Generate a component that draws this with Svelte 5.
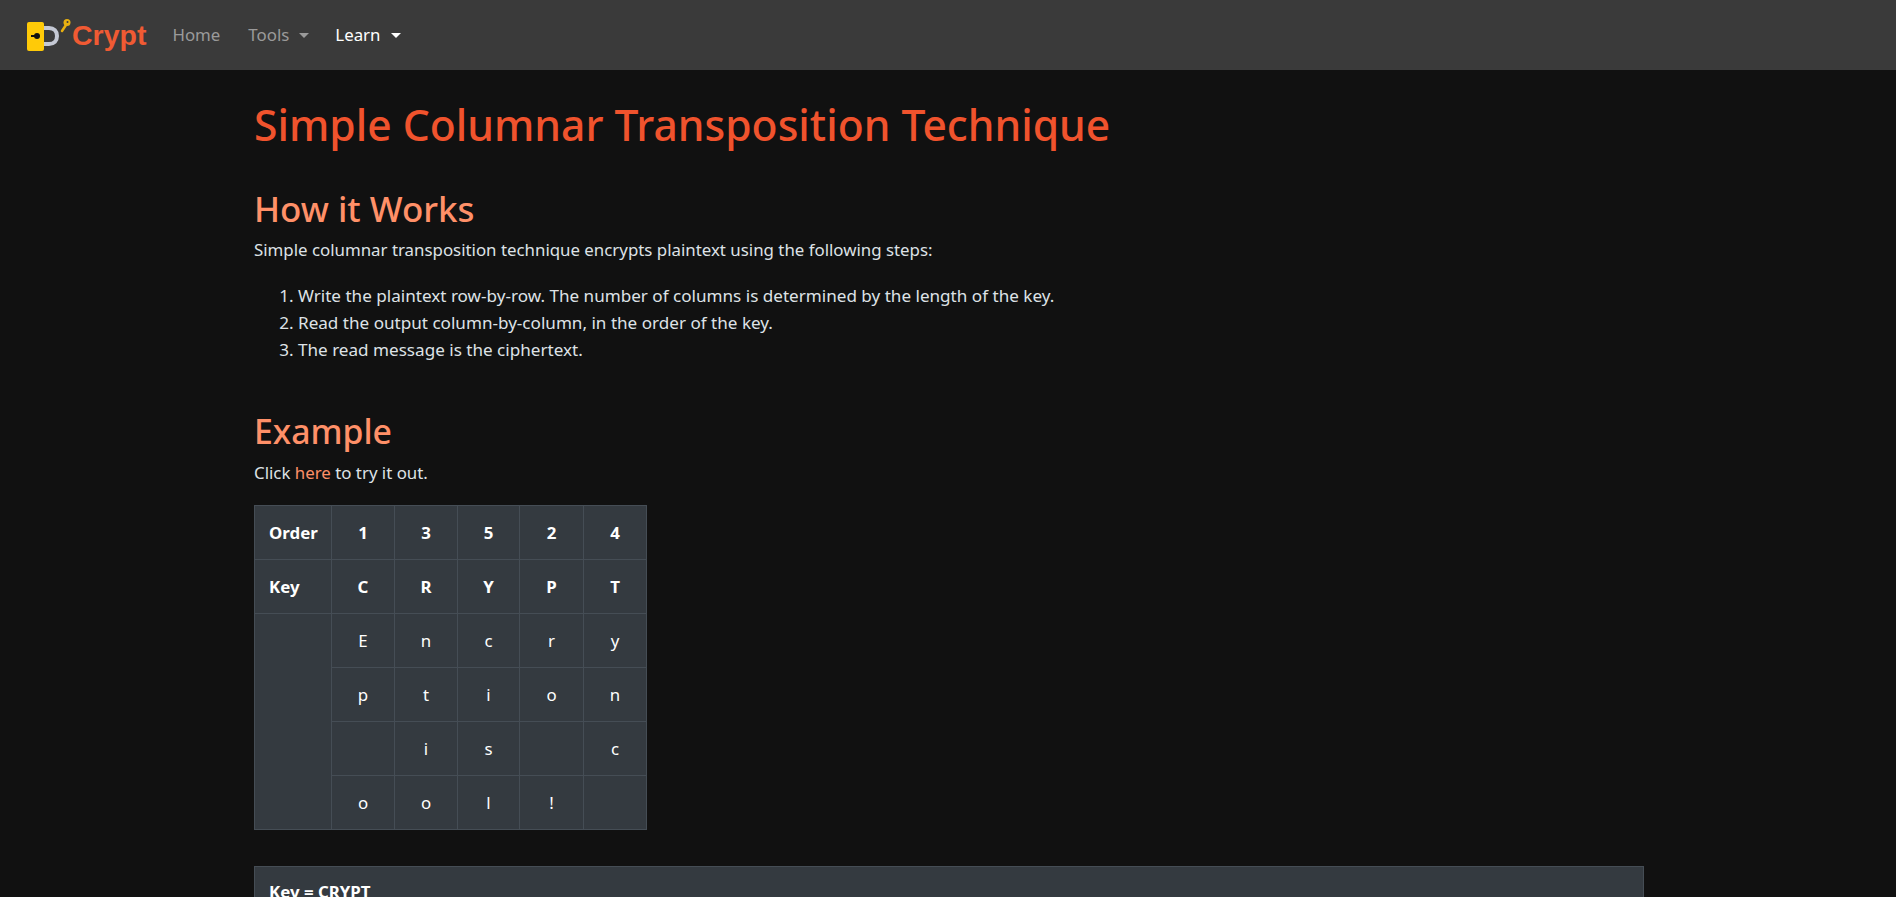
<script>
  const header = ["1", "3", "5", "2", "4"];
  const keyRow = ["C", "R", "Y", "P", "T"];
  const grid = [
    ["E", "n", "c", "r", "y"],
    ["p", "t", "i", "o", "n"],
    ["", "i", "s", "", "c"],
    ["o", "o", "l", "!", ""],
  ];
  const steps = [
    "Write the plaintext row-by-row. The number of columns is determined by the length of the key.",
    "Read the output column-by-column, in the order of the key.",
    "The read message is the ciphertext.",
  ];
</script>

<div class="page">
  <nav class="navbar">
    <a class="brand" href="#top">
      <svg class="logo" width="50" height="36" viewBox="0 0 50 36" aria-hidden="true">
        <path d="M17 12h6c5 0 8 3 8 8s-3 8-8 8h-6" fill="none" stroke="#c4c8d4" stroke-width="4" />
        <rect x="1" y="6" width="17" height="29" rx="2" fill="#ffca08" />
        <circle cx="11" cy="20" r="3" fill="#111" />
        <rect x="5" y="19" width="6" height="2" fill="#111" />
        <path d="M40 9l-4 6" stroke="#e8b010" stroke-width="2.500" stroke-linecap="round" />
        <circle cx="41" cy="6.500" r="3.500" fill="#e8b010" />
        <circle cx="41.500" cy="6" r="1" fill="#3a3a3a" />
      </svg>
      <span>Crypt</span>
    </a>
    <ul class="links">
      <li><a href="#top">Home</a></li>
      <li><a class="caret" href="#top">Tools</a></li>
      <li><a class="caret active" href="#top">Learn</a></li>
    </ul>
  </nav>

  <main class="container">
    <h1>Simple Columnar Transposition Technique</h1>

    <h2 class="works">How it Works</h2>
    <p>Simple columnar transposition technique encrypts plaintext using the following steps:</p>
    <ol>
      {#each steps as step}
        <li>{step}</li>
      {/each}
    </ol>

    <h2 class="example">Example</h2>
    <p>Click <a href="#top">here</a> to try it out.</p>

    <table>
      <colgroup>
        <col class="c0" />
        <col class="c1" />
        <col class="c1" />
        <col class="c2" />
        <col class="c3" />
        <col class="c4" />
      </colgroup>
      <tbody>
        <tr>
          <th class="label">Order</th>
          {#each header as h}<th>{h}</th>{/each}
        </tr>
        <tr>
          <th class="label">Key</th>
          {#each keyRow as k}<th>{k}</th>{/each}
        </tr>
        {#each grid as row, i}
          <tr>
            {#if i === 0}<td class="label" rowspan="4"></td>{/if}
            {#each row as c}<td>{c}</td>{/each}
          </tr>
        {/each}
      </tbody>
    </table>

    <div class="box">
      <strong>Key = CRYPT</strong>
    </div>
  </main>
</div>

<style>
  :global(body) {
    margin: 0;
    background: #111;
  }
  .page {
    height: 897px;
    overflow: hidden;
    background: #111;
    color: #dee2e6;
    font-family: "Noto Sans", "Open Sans", sans-serif;
    font-size: 16.85px;
    line-height: 24px;
  }
  .navbar {
    height: 70px;
    box-sizing: border-box;
    display: flex;
    align-items: center;
    padding: 0 24px 0 26px;
    background: #3a3a3a;
  }
  .brand {
    display: flex;
    align-items: center;
    color: #f05a33;
    text-decoration: none;
    font-family: "Liberation Sans", Arial, sans-serif;
    font-weight: 700;
    font-size: 28.5px;
  }
  .logo {
    margin-right: -4px;
    margin-top: -2px;
  }
  .links {
    display: flex;
    list-style: none;
    margin: 0 0 0 18px;
    padding: 0;
  }
  .links a {
    display: block;
    padding: 0 8px;
    margin-right: 10px;
    color: #9a9a9a;
    text-decoration: none;
  }
  .links li:first-child a {
    margin-right: 12px;
  }
  .links a.active {
    color: #fff;
  }
  .caret::after {
    content: "";
    display: inline-block;
    margin-left: 10px;
    vertical-align: 3px;
    border-top: 5px solid currentColor;
    border-left: 5px solid transparent;
    border-right: 5px solid transparent;
  }
  .container {
    width: 1390px;
    margin: 0 0 0 254px;
  }
  h1 {
    margin: 0;
    padding-top: 29px;
    color: #f0532d;
    font-size: 42.6px;
    font-weight: 500;
    line-height: 50px;
  }
  h2 {
    margin: 0 0 8px;
    color: #ff9068;
    font-size: 34.9px;
    font-weight: 500;
    line-height: 41px;
  }
  h2.works {
    margin-top: 39px;
  }
  h2.example {
    margin-top: 48px;
    margin-bottom: 8px;
    font-size: 33.8px;
  }
  p {
    margin: 0 0 19px;
    line-height: 26px;
  }
  p a {
    color: #ff9068;
    text-decoration: none;
  }
  ol {
    margin: 0 0 16px;
    padding-left: 44px;
    font-size: 17.1px;
    line-height: 27px;
  }
  table {
    border-collapse: collapse;
    background: #343a40;
    color: #fff;
    table-layout: fixed;
    width: 392px;
    margin-bottom: 36px;
  }
  .c0 {
    width: 77px;
  }
  .c1 {
    width: 63px;
  }
  .c2 {
    width: 62px;
  }
  .c3 {
    width: 64px;
  }
  .c4 {
    width: 63px;
  }
  th,
  td {
    height: 54px;
    box-sizing: border-box;
    border: 1px solid #454d55;
    padding: 0;
    text-align: center;
    font-weight: 400;
  }
  th {
    font-weight: 700;
  }
  .label {
    text-align: left;
    padding-left: 14px;
  }
  .box {
    height: 200px;
    box-sizing: border-box;
    padding: 13px 14px;
    background: #343a40;
    border: 1px solid #454d55;
    color: #fff;
  }
</style>
